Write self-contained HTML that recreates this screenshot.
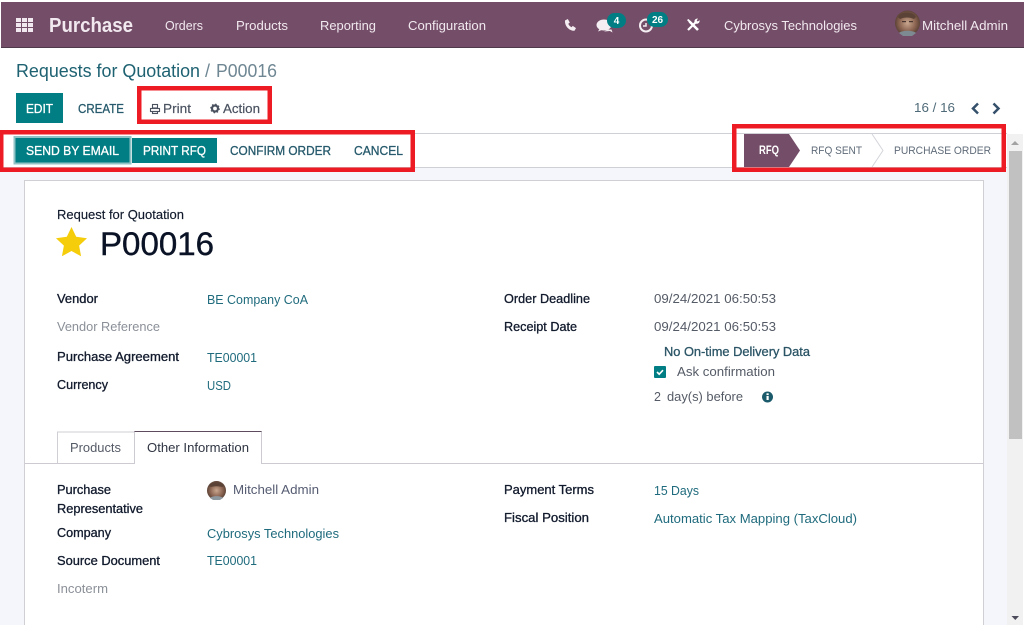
<!DOCTYPE html>
<html lang="en"><head><meta charset="utf-8"><title>Purchase</title>
<style>
html,body{margin:0;padding:0;width:1024px;height:625px;overflow:hidden;background:#fff}
svg{display:block;position:absolute;left:0;top:0}
text{font-family:"Liberation Sans",sans-serif;font-size:12.5px}
.nav{fill:#f1e9ef;font-size:13px}
.l{fill:#111a2c;stroke:#111a2c;stroke-width:.3px;font-size:12.5px}
.g{fill:#8b9098;font-size:12.5px}
.v{fill:#1f6b7d}
.d{fill:#555b66}
.b{fill:#265a6c;stroke:#265a6c;stroke-width:.3px;font-size:12.5px}
.w{fill:#fff;stroke:#fff;stroke-width:.3px;font-size:12.5px}
.s{fill:#5f6b78;font-size:11px}
</style></head><body>
<svg width="1024" height="625" viewBox="0 0 1024 625">
<defs>
<radialGradient id="av" cx="50%" cy="50%" r="55%"><stop offset="0" stop-color="#c9a78f"/><stop offset=".6" stop-color="#8a6350"/><stop offset="1" stop-color="#4f3a30"/></radialGradient>
</defs>
<rect width="1024" height="625" fill="#fff"/>
<!-- navbar -->
<rect x="1" y="2" width="1023" height="45" fill="#744d68"/>
<rect x="1" y="47" width="1023" height="1" fill="#4f3a4c"/>
<g fill="#f1e9ef">
<rect x="16" y="18" width="5" height="4"/><rect x="22" y="18" width="5" height="4"/><rect x="28" y="18" width="5" height="4"/>
<rect x="16" y="23" width="5" height="4"/><rect x="22" y="23" width="5" height="4"/><rect x="28" y="23" width="5" height="4"/>
<rect x="16" y="28" width="5" height="4"/><rect x="22" y="28" width="5" height="4"/><rect x="28" y="28" width="5" height="4"/>
</g>
<text x="49" y="32" font-weight="bold" style="font-size:20px" fill="#f1e9ef" textLength="84" lengthAdjust="spacingAndGlyphs">Purchase</text>
<text class="nav" x="165" y="30" textLength="38" lengthAdjust="spacingAndGlyphs">Orders</text>
<text class="nav" x="236" y="30" textLength="52" lengthAdjust="spacingAndGlyphs">Products</text>
<text class="nav" x="320" y="30" textLength="56" lengthAdjust="spacingAndGlyphs">Reporting</text>
<text class="nav" x="408" y="30" textLength="78" lengthAdjust="spacingAndGlyphs">Configuration</text>
<!-- phone -->
<path d="M565 20.500l2.800-1.500 2 3.500-1.500 1.300c.5 1.500 1.700 2.700 3.200 3.400l1.300-1.300 3.200 2.200-1.500 2.700c-5.500.2-10-5-9.500-10.300z" fill="#f4eef2"/>
<!-- chat -->
<ellipse cx="604" cy="25" rx="7.500" ry="5.500" fill="#f4eef2"/>
<path d="M600 28l-2 3.500 5-2z" fill="#f4eef2"/>
<path d="M604 31.500l6-.5 2.500 1.500-1-3-3.500 0z" fill="#f4eef2"/>
<rect x="607" y="13" width="19" height="15" rx="7.500" fill="#017e84"/>
<text x="616.500" y="24" text-anchor="middle" fill="#fff" font-weight="bold" style="font-size:10px">4</text>
<!-- clock -->
<circle cx="646" cy="25.500" r="6" fill="none" stroke="#f4eef2" stroke-width="2"/>
<path d="M646 23v3h-3" fill="none" stroke="#f4eef2" stroke-width="1.500"/>
<rect x="647" y="12" width="21" height="15" rx="7.500" fill="#017e84"/>
<text x="657.500" y="23" text-anchor="middle" fill="#fff" font-weight="bold" style="font-size:10px">26</text>
<!-- tools -->
<path d="M689.500 21.500l8.500 8.500" stroke="#fff" stroke-width="2.600" fill="none"/>
<path d="M688 30l8-8" stroke="#fff" stroke-width="2.200" fill="none"/>
<path d="M687 20l1.500-1 3 3-1.500 1.500z" fill="#fff"/>
<path d="M694.500 22c-.3-2 1-3.500 3.500-3.500l-1.300 2 1 1 2-1.300c0 2.500-1.500 3.800-3.500 3.500z" fill="#fff"/>
<text class="nav" x="724" y="30" textLength="133" lengthAdjust="spacingAndGlyphs">Cybrosys Technologies</text>
<circle cx="907.500" cy="23" r="12.500" fill="url(#av)"/>
<path d="M898 17c3-6 15-6 18 0l-2 2c-4-2-10-2-14 0z" fill="#5a4236"/>
<path d="M899 33c3-3 14-3 17 0l-4 3h-9z" fill="#7d8a92"/>
<rect x="902" y="21" width="4" height="1.200" fill="#4a3630"/><rect x="909" y="21" width="4" height="1.200" fill="#4a3630"/>
<text class="nav" x="922" y="30" textLength="86" lengthAdjust="spacingAndGlyphs">Mitchell Admin</text>
<!-- breadcrumb -->
<text x="16" y="77" style="font-size:18px" fill="#1e6272" textLength="184" lengthAdjust="spacingAndGlyphs">Requests for Quotation</text>
<text x="205" y="77" style="font-size:18px" fill="#6f8793">/</text>
<text x="216" y="77" style="font-size:18px" fill="#6f8793" textLength="61" lengthAdjust="spacingAndGlyphs">P00016</text>
<!-- buttons -->
<rect x="16" y="93" width="47" height="30" fill="#017e84"/>
<text class="w" x="26" y="113" textLength="27" lengthAdjust="spacingAndGlyphs">EDIT</text>
<text class="b" x="78" y="113" textLength="46" lengthAdjust="spacingAndGlyphs">CREATE</text>
<g fill="none" stroke="#4a5260" stroke-width="1.100">
<rect x="152.500" y="104.500" width="5" height="3.500"/>
<rect x="150.500" y="108.500" width="9" height="3"/>
<rect x="152.500" y="111.500" width="5" height="2"/>
</g>
<circle cx="215" cy="108.500" r="3" fill="none" stroke="#4a5260" stroke-width="2.200"/>
<circle cx="215" cy="108.500" r="4.300" fill="none" stroke="#4a5260" stroke-width="1.100" stroke-dasharray="1.500 1.880"/>
<text x="163" y="113" style="font-size:13px" fill="#4a5260" stroke="#4a5260" stroke-width=".2" textLength="28" lengthAdjust="spacingAndGlyphs">Print</text>
<text x="223" y="113" style="font-size:13px" fill="#4a5260" stroke="#4a5260" stroke-width=".2" textLength="37" lengthAdjust="spacingAndGlyphs">Action</text>
<text x="914" y="112" style="font-size:13px" fill="#4f6a78" textLength="41" lengthAdjust="spacingAndGlyphs">16 / 16</text>
<path d="M978 103.500l-5 5 5 5M993.500 103.500l5 5-5 5" fill="none" stroke="#35506b" stroke-width="2.500"/>
<!-- control panel + background -->
<rect x="0" y="133" width="1007" height="1" fill="#cfd0d6"/>
<rect x="0" y="167" width="1007" height="1" fill="#cfd0d6"/>
<rect x="0" y="168" width="1007" height="457" fill="#f4f6fb"/>
<rect x="24.500" y="180.500" width="959" height="460" fill="#fff" stroke="#cfcfd4"/>
<!-- statusbar buttons -->
<rect x="14.500" y="137" width="116" height="26.500" fill="#017e84" stroke="#8fc3c5" stroke-width="2"/>
<text class="w" x="26" y="155" textLength="93" lengthAdjust="spacingAndGlyphs">SEND BY EMAIL</text>
<rect x="132" y="138" width="85" height="25" fill="#017e84"/>
<text class="w" x="143" y="155" textLength="63" lengthAdjust="spacingAndGlyphs">PRINT RFQ</text>
<text class="b" x="230" y="155" textLength="101" lengthAdjust="spacingAndGlyphs">CONFIRM ORDER</text>
<text class="b" x="354" y="155" textLength="49" lengthAdjust="spacingAndGlyphs">CANCEL</text>
<path d="M744 134h45l11 16.500-11 16.500h-45z" fill="#744d68"/>
<text x="759" y="154" fill="#fff" font-weight="bold" style="font-size:11.500px" textLength="20" lengthAdjust="spacingAndGlyphs">RFQ</text>
<text class="s" x="811" y="154" textLength="51" lengthAdjust="spacingAndGlyphs">RFQ SENT</text>
<path d="M872 134l11 16.500-11 16.500" fill="none" stroke="#d3d5da"/>
<text class="s" x="894" y="154" textLength="97" lengthAdjust="spacingAndGlyphs">PURCHASE ORDER</text>
<!-- red boxes -->
<g fill="none" stroke="#ed1c24" stroke-width="4.500">
<rect x="139.250" y="88.250" width="130.500" height="33.500"/>
<rect x="1.250" y="132.250" width="411.500" height="37.500"/>
<rect x="734.250" y="126.250" width="269.500" height="43.500"/>
</g>
<!-- scrollbar -->
<rect x="1007" y="134" width="16" height="491" fill="#f1f1f1"/>
<rect x="1009" y="151" width="13" height="288" fill="#c1c1c1"/>
<path d="M1015 141l4 4h-8z" fill="#a3a3a3"/>
<path d="M1011.500 616h7.500l-3.700 4z" fill="#4b4b5c"/>
<!-- header -->
<text x="57" y="219" fill="#111a2c" stroke="#111a2c" stroke-width=".15" style="font-size:12.500px" textLength="127" lengthAdjust="spacingAndGlyphs">Request for Quotation</text>
<path d="M71.500 227l4.700 9.800 10.800 1.400-7.900 7.400 2 10.700-9.600-5.300-9.600 5.300 2-10.700-7.900-7.400 10.800-1.400z" fill="#f5cd0a"/>
<text x="100" y="255" fill="#0a1226" stroke="#0a1226" stroke-width=".4" style="font-size:32px" textLength="114" lengthAdjust="spacingAndGlyphs">P00016</text>
<!-- left fields -->
<text class="l" x="57" y="303" textLength="41" lengthAdjust="spacingAndGlyphs">Vendor</text>
<text class="v" x="207" y="304" textLength="101" lengthAdjust="spacingAndGlyphs">BE Company CoA</text>
<text class="g" x="57" y="331" textLength="103" lengthAdjust="spacingAndGlyphs">Vendor Reference</text>
<text class="l" x="57" y="361" textLength="122" lengthAdjust="spacingAndGlyphs">Purchase Agreement</text>
<text class="v" x="207" y="362" textLength="50" lengthAdjust="spacingAndGlyphs">TE00001</text>
<text class="l" x="57" y="389" textLength="51" lengthAdjust="spacingAndGlyphs">Currency</text>
<text class="v" x="207" y="390" textLength="24" lengthAdjust="spacingAndGlyphs">USD</text>
<!-- right fields -->
<text class="l" x="504" y="303" textLength="86" lengthAdjust="spacingAndGlyphs">Order Deadline</text>
<text class="d" x="654" y="303" textLength="122" lengthAdjust="spacingAndGlyphs">09/24/2021 06:50:53</text>
<text class="l" x="504" y="331" textLength="73" lengthAdjust="spacingAndGlyphs">Receipt Date</text>
<text class="d" x="654" y="331" textLength="122" lengthAdjust="spacingAndGlyphs">09/24/2021 06:50:53</text>
<text x="664" y="356" fill="#2b5566" stroke="#2b5566" stroke-width=".3" style="font-size:12.500px" textLength="146" lengthAdjust="spacingAndGlyphs">No On-time Delivery Data</text>
<rect x="654" y="366" width="12" height="12" rx="1" fill="#017e84"/>
<path d="M657 372l2.200 2.200 3.800-4" fill="none" stroke="#fff" stroke-width="1.600"/>
<text class="d" x="677" y="376" textLength="98" lengthAdjust="spacingAndGlyphs">Ask confirmation</text>
<text class="d" x="654" y="401">2</text>
<text class="d" x="667" y="401" textLength="76" lengthAdjust="spacingAndGlyphs">day(s) before</text>
<circle cx="767.500" cy="397" r="5.500" fill="#1b5a6a"/>
<rect x="766.500" y="396" width="2.200" height="4" fill="#fff"/><rect x="766.500" y="393.300" width="2.200" height="1.800" fill="#fff"/>
<!-- tabs -->
<rect x="25" y="463" width="958" height="1" fill="#cdcbd1"/>
<path d="M57.500 463v-31h76.500" fill="none" stroke="#cfcfd4"/>
<rect x="134" y="431" width="128" height="33" fill="#fff"/>
<path d="M134.500 464v-32.500h127v32.500" fill="none" stroke="#cdcbd1"/>
<path d="M134.500 431.500h127" fill="none" stroke="#5e4b5e"/>
<text x="70" y="452" class="d" textLength="51" lengthAdjust="spacingAndGlyphs">Products</text>
<text x="147" y="452" fill="#2f3542" textLength="102" lengthAdjust="spacingAndGlyphs">Other Information</text>
<!-- other info -->
<text class="l" x="57" y="494" textLength="54" lengthAdjust="spacingAndGlyphs">Purchase</text>
<text class="l" x="57" y="513" textLength="86" lengthAdjust="spacingAndGlyphs">Representative</text>
<circle cx="216.500" cy="490.500" r="9.500" fill="url(#av)"/>
<path d="M209 486c2-5 13-5 15 0l-2 1c-3-1-8-1-11 0z" fill="#5a4236"/>
<path d="M210 498c2-2.500 11-2.500 13 0l-3 2h-7z" fill="#8d979e"/>
<text x="233" y="494" fill="#565c72" textLength="86" lengthAdjust="spacingAndGlyphs">Mitchell Admin</text>
<text class="l" x="57" y="537" textLength="54" lengthAdjust="spacingAndGlyphs">Company</text>
<text class="v" x="207" y="538" textLength="132" lengthAdjust="spacingAndGlyphs">Cybrosys Technologies</text>
<text class="l" x="57" y="565" textLength="103" lengthAdjust="spacingAndGlyphs">Source Document</text>
<text class="v" x="207" y="565" textLength="50" lengthAdjust="spacingAndGlyphs">TE00001</text>
<text class="g" x="57" y="593" textLength="51" lengthAdjust="spacingAndGlyphs">Incoterm</text>
<text class="l" x="504" y="494" textLength="90" lengthAdjust="spacingAndGlyphs">Payment Terms</text>
<text class="v" x="654" y="495" textLength="45" lengthAdjust="spacingAndGlyphs">15 Days</text>
<text class="l" x="504" y="522" textLength="85" lengthAdjust="spacingAndGlyphs">Fiscal Position</text>
<text class="v" x="654" y="523" textLength="203" lengthAdjust="spacingAndGlyphs">Automatic Tax Mapping (TaxCloud)</text>
</svg>
</body></html>
